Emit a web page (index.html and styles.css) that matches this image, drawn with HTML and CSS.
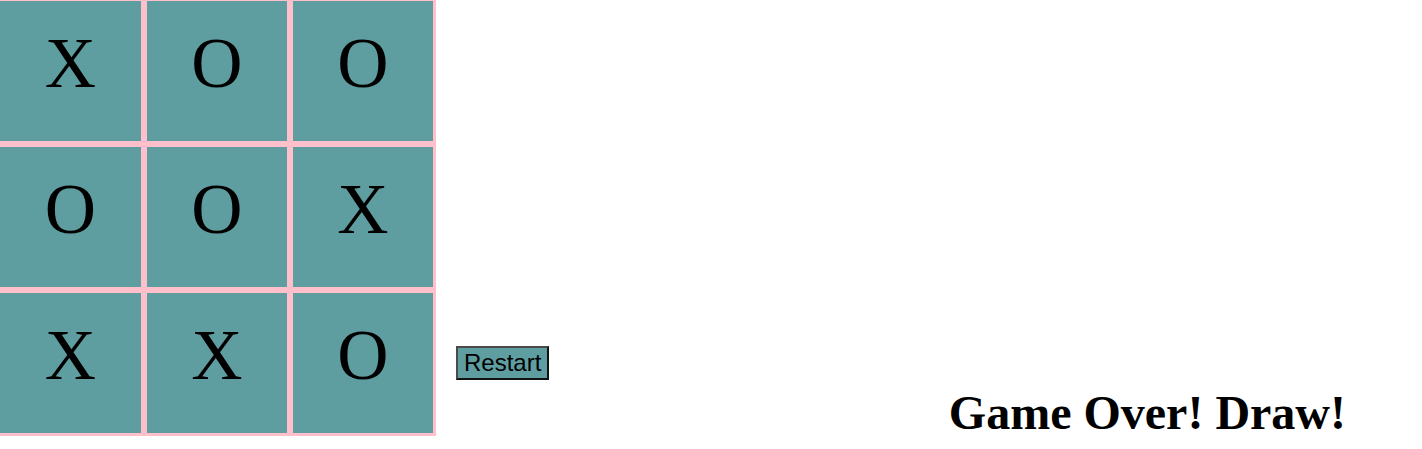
FILE: index.html
```html
<!DOCTYPE html>
<html lang="en">
<head>
<meta charset="utf-8">
<title>Tic Tac Toe</title>
<link rel="stylesheet" href="styles.css">
</head>
<body>
<div class="page">
  <div class="board">
    <div class="cell">X</div>
    <div class="cell">O</div>
    <div class="cell">O</div>
    <div class="cell">O</div>
    <div class="cell">O</div>
    <div class="cell">X</div>
    <div class="cell">X</div>
    <div class="cell">X</div>
    <div class="cell">O</div>
  </div>
  <button class="restart" type="button">Restart</button>
  <h1 class="status">Game Over! Draw!</h1>
</div>
</body>
</html>
```
FILE: styles.css
```css
html, body {
  margin: 0;
  padding: 0;
  background: #ffffff;
}

body {
  font-family: "Liberation Serif", "Times New Roman", serif;
  color: #000000;
}

.page {
  display: flex;
  align-items: flex-start;
}

.board {
  display: grid;
  grid-template-columns: 141px 140px 140px;
  grid-template-rows: 140px 140px 140px;
  gap: 6px;
  padding: 1px 2.5px 2.5px 0;
  background: #ffc0cb;
  flex: none;
}

.cell {
  background: #5f9ea0;
  display: flex;
  align-items: center;
  justify-content: center;
  font-family: "Liberation Serif", "Times New Roman", serif;
  font-size: 71px;
  padding-bottom: 15px;
  box-sizing: border-box;
}

.restart {
  align-self: flex-end;
  margin: 0 0 55.5px 20.5px;
  padding: 1px 6px;
  font-family: "Liberation Sans", Arial, sans-serif;
  font-size: 24px;
  line-height: normal;
  color: #000000;
  background: #5f9ea0;
  border: 2px solid;
  border-color: #4a4a4a #111111 #111111 #4a4a4a;
  flex: none;
}

.status {
  align-self: flex-end;
  margin: 0 76px -1px auto;
  font-family: "Liberation Serif", "Times New Roman", serif;
  font-size: 48px;
  font-weight: bold;
  line-height: 48px;
  white-space: nowrap;
}
```
